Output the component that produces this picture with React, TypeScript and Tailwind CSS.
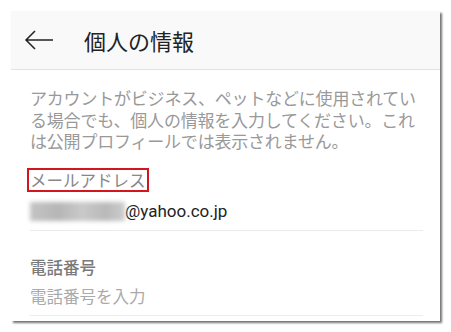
export default function App() {
  return (
    <div className="min-h-screen w-[451px] bg-white pl-[11px] pt-[11px]" style={{ fontFamily: '"Noto Sans CJK JP", "Noto Sans", sans-serif' }}>
      <div className="w-[429px] h-[310px] bg-white shadow-[2px_2px_2px_rgba(0,0,0,0.55)]">
        {/* header */}
        <div className="h-[59px] bg-[#f9f9f9] border-b border-[#e2e2e2] flex items-center">
          <svg width="30" height="20" viewBox="0 0 30 20" className="ml-[13px]">
            <path d="M29 10H2M11 1L2 10l9 9" fill="none" stroke="#222" strokeWidth="1.5" />
          </svg>
          <h1 className="ml-[30px] text-[22px] leading-none text-[#222]">個人の情報</h1>
        </div>

        <div className="pl-[19px] pr-[17px] pt-[17px]">
          <p className="text-[17px] leading-[21.5px] text-[#999] tracking-[-0.2px]">
            アカウントがビジネス、ペットなどに使用されている場合でも、個人の情報を入力してください。これは公開プロフィールでは表示されません。
          </p>

          <div className="mt-[16px] -ml-[3px]">
            <span className="inline-block border-2 border-[#d3161d] px-[1px] text-[16.5px] leading-[20px] text-[#888]">
              メールアドレス
            </span>
          </div>

          <div className="mt-[10px] flex items-center h-[20px]">
            <div className="w-[95px] h-[19px] bg-[linear-gradient(90deg,#c4c4c4,#b6b6b6_30%,#c9c9c9_55%,#b9b9b9_80%,#cdcdcd)] blur-[2px]" />
            <span className="text-[17px] text-[#222]" style={{ fontFamily: 'Roboto, "Noto Sans", sans-serif' }}>
              @yahoo.co.jp
            </span>
          </div>

          <div className="mt-[8px] border-b border-[#ececec]" />

          <div className="mt-[25px] text-[16.5px] leading-[22px] font-medium text-[#7a7a7a]">電話番号</div>
          <div className="mt-[7px] text-[16.5px] leading-[22px] text-[#aaaaaa]">電話番号を入力</div>
          <div className="mt-[8px] border-b border-[#ececec]" />
        </div>
      </div>
    </div>
  );
}
